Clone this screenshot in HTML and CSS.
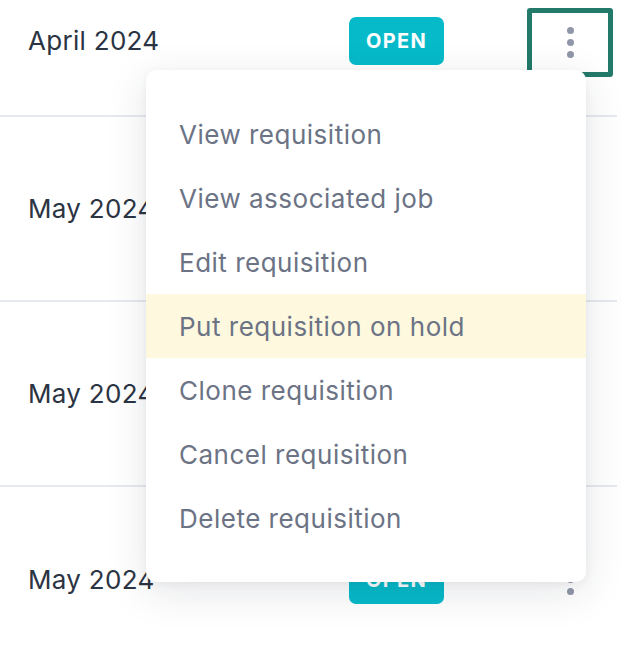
FILE: index.html
```html
<!DOCTYPE html>
<html lang="en">
<head>
<meta charset="utf-8">
<title>Requisitions</title>
<link rel="stylesheet" href="styles.css">
</head>
<body>
<div class="page">
  <div class="rows">
    <div class="row row-first">
      <div class="date">April 2024</div>
      <div class="badge">OPEN</div>
      <button class="kebab kebab-focus" aria-label="Actions"><span></span><span></span><span></span></button>
    </div>
    <div class="row">
      <div class="date">May 2024</div>
      <div class="badge">OPEN</div>
      <button class="kebab" aria-label="Actions"><span></span><span></span><span></span></button>
    </div>
    <div class="row">
      <div class="date">May 2024</div>
      <div class="badge">OPEN</div>
      <button class="kebab" aria-label="Actions"><span></span><span></span><span></span></button>
    </div>
    <div class="row row-last">
      <div class="date">May 2024</div>
      <div class="badge">OPEN</div>
      <button class="kebab" aria-label="Actions"><span></span><span></span><span></span></button>
    </div>
  </div>
  <ul class="menu">
    <li class="menu-item">View requisition</li>
    <li class="menu-item">View associated job</li>
    <li class="menu-item">Edit requisition</li>
    <li class="menu-item menu-item-active">Put requisition on hold</li>
    <li class="menu-item">Clone requisition</li>
    <li class="menu-item">Cancel requisition</li>
    <li class="menu-item">Delete requisition</li>
  </ul>
</div>
</body>
</html>
```
FILE: styles.css
```css
* { box-sizing: border-box; }
html, body { margin: 0; padding: 0; background: #ffffff; }
body {
  font-family: Inter, "Noto Sans", "Liberation Sans", sans-serif;
  overflow: hidden;
}
.page {
  position: relative;
  width: 630px;
  height: 662px;
  overflow: hidden;
}
.rows {
  width: 617px;
}
.row {
  display: flex;
  align-items: center;
  height: 185px;
  padding-left: 28px;
  border-bottom: 2px solid #e6e9f0;
}
.row-first {
  height: 117px;
  align-items: flex-start;
  padding-top: 17px;
}
.row-first .kebab { margin-top: -9px; }
.row-last { border-bottom: none; }
.date {
  width: 321px;
  font-size: 26px;
  letter-spacing: 0.3px;
  color: #2b3443;
  line-height: 48px;
}
.badge {
  width: 95px;
  height: 48px;
  border-radius: 7px;
  background: #06bac9;
  color: #ffffff;
  font-weight: 700;
  font-size: 20px;
  letter-spacing: 1.3px;
  display: flex;
  align-items: center;
  justify-content: center;
}
.kebab {
  margin-left: 83px;
  width: 86px;
  height: 69px;
  border: 5px solid transparent;
  border-radius: 3px;
  background: transparent;
  padding: 0;
  display: flex;
  flex-direction: column;
  align-items: center;
  justify-content: center;
  gap: 5px;
}
.kebab span {
  width: 7px;
  height: 7px;
  border-radius: 50%;
  background: #8f96a8;
}
.kebab-focus { border-color: #23796a; }
.menu {
  position: absolute;
  left: 146px;
  top: 70px;
  width: 440px;
  margin: 0;
  padding: 32px 0;
  list-style: none;
  background: #ffffff;
  border-radius: 10px;
  box-shadow: 0 10px 40px rgba(30, 40, 60, 0.12), 0 2px 8px rgba(30, 40, 60, 0.05);
}
.menu-item {
  height: 64px;
  display: flex;
  align-items: center;
  padding-left: 33px;
  font-size: 26px;
  letter-spacing: 0.5px;
  color: #6b7385;
}
.menu-item-active { background: #fef8df; }
```
